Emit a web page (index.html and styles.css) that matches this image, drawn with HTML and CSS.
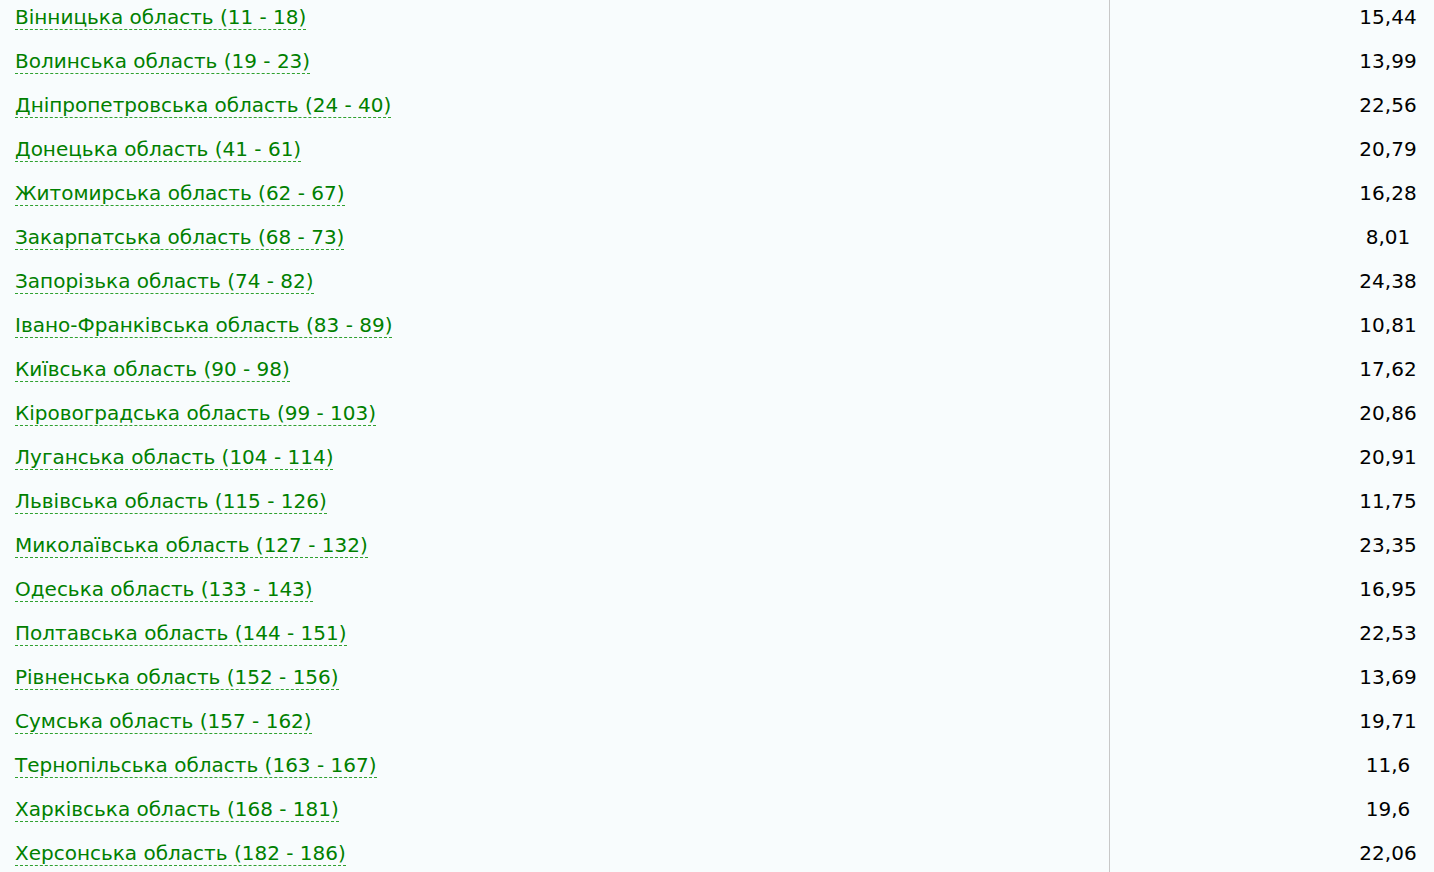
FILE: index.html
```html
<!DOCTYPE html>
<html lang="uk">
<head>
<meta charset="utf-8">
<title>Області</title>
<link rel="stylesheet" href="styles.css">
</head>
<body>
<div class="table">
  <div class="row"><div class="name"><a href="#">Вінницька область (11 - 18)</a></div><div class="val"><span>15,44</span></div></div>
  <div class="row"><div class="name"><a href="#">Волинська область (19 - 23)</a></div><div class="val"><span>13,99</span></div></div>
  <div class="row"><div class="name"><a href="#">Дніпропетровська область (24 - 40)</a></div><div class="val"><span>22,56</span></div></div>
  <div class="row"><div class="name"><a href="#">Донецька область (41 - 61)</a></div><div class="val"><span>20,79</span></div></div>
  <div class="row"><div class="name"><a href="#">Житомирська область (62 - 67)</a></div><div class="val"><span>16,28</span></div></div>
  <div class="row"><div class="name"><a href="#">Закарпатська область (68 - 73)</a></div><div class="val"><span>8,01</span></div></div>
  <div class="row"><div class="name"><a href="#">Запорізька область (74 - 82)</a></div><div class="val"><span>24,38</span></div></div>
  <div class="row"><div class="name"><a href="#">Івано-Франківська область (83 - 89)</a></div><div class="val"><span>10,81</span></div></div>
  <div class="row"><div class="name"><a href="#">Київська область (90 - 98)</a></div><div class="val"><span>17,62</span></div></div>
  <div class="row"><div class="name"><a href="#">Кіровоградська область (99 - 103)</a></div><div class="val"><span>20,86</span></div></div>
  <div class="row"><div class="name"><a href="#">Луганська область (104 - 114)</a></div><div class="val"><span>20,91</span></div></div>
  <div class="row"><div class="name"><a href="#">Львівська область (115 - 126)</a></div><div class="val"><span>11,75</span></div></div>
  <div class="row"><div class="name"><a href="#">Миколаївська область (127 - 132)</a></div><div class="val"><span>23,35</span></div></div>
  <div class="row"><div class="name"><a href="#">Одеська область (133 - 143)</a></div><div class="val"><span>16,95</span></div></div>
  <div class="row"><div class="name"><a href="#">Полтавська область (144 - 151)</a></div><div class="val"><span>22,53</span></div></div>
  <div class="row"><div class="name"><a href="#">Рівненська область (152 - 156)</a></div><div class="val"><span>13,69</span></div></div>
  <div class="row"><div class="name"><a href="#">Сумська область (157 - 162)</a></div><div class="val"><span>19,71</span></div></div>
  <div class="row"><div class="name"><a href="#">Тернопільська область (163 - 167)</a></div><div class="val"><span>11,6</span></div></div>
  <div class="row"><div class="name"><a href="#">Харківська область (168 - 181)</a></div><div class="val"><span>19,6</span></div></div>
  <div class="row"><div class="name"><a href="#">Херсонська область (182 - 186)</a></div><div class="val"><span>22,06</span></div></div>
</div>
</body>
</html>
```
FILE: styles.css
```css
html, body {
  margin: 0;
  padding: 0;
  background: #f8fcfd;
}
body {
  font-family: "DejaVu Sans", Verdana, sans-serif;
  font-size: 20px;
  color: #000;
  overflow: hidden;
}
.table {
  display: grid;
  grid-template-columns: 1110px 1fr;
  margin-top: -5px;
}
.row {
  display: contents;
}
.name {
  border-right: 1px solid #c8c8c8;
  padding: 0 0 0 15px;
  height: 44px;
  display: flex;
  align-items: center;
}
.name a {
  color: #008000;
  text-decoration: none;
  border-bottom: 1px dashed #2fa12f;
  line-height: 24px;
}
.val {
  height: 44px;
  display: flex;
  align-items: center;
  justify-content: flex-end;
}
.val span {
  width: 92px;
  text-align: center;
  line-height: 24px;
}
```
